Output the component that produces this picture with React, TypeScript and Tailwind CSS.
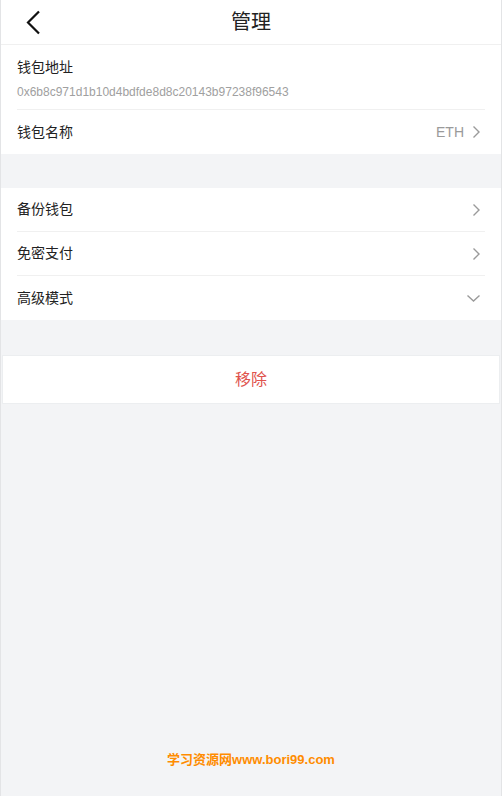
import React from "react";

const font = { fontFamily: '"Liberation Sans", "Noto Sans CJK SC", sans-serif' };

function ChevronRight() {
  return (
    <svg width="9" height="14" viewBox="0 0 9 14" fill="none">
      <path d="M1.5 1.5 L7 7 L1.5 12.5" stroke="#9a9a9a" strokeWidth="1.4" />
    </svg>
  );
}

function ChevronDown() {
  return (
    <svg width="15" height="9" viewBox="0 0 15 9" fill="none">
      <path d="M1.5 1.5 L7.5 7 L13.5 1.5" stroke="#9a9a9a" strokeWidth="1.4" />
    </svg>
  );
}

export default function App() {
  const menu = [
    { label: "备份钱包", icon: <ChevronRight /> },
    { label: "免密支付", icon: <ChevronRight /> },
    { label: "高级模式", icon: <ChevronDown /> },
  ];

  return (
    <div
      className="min-h-[796px] bg-[#f3f4f6] border-x border-[#e3e4e6] flex flex-col text-[#222]"
      style={font}
    >
      {/* HEADER */}
      <div className="relative h-[45px] bg-white border-b border-[#f0f0f0] flex items-center justify-center">
        <button className="absolute left-[24px] top-[10px]">
          <svg width="18" height="25" viewBox="0 0 18 25" fill="none">
            <path d="M14 1.5 L3 12.5 L14 23.5" stroke="#111" strokeWidth="2.2" />
          </svg>
        </button>
        <span className="text-[20px] text-[#222]">管理</span>
      </div>

      {/* WALLET INFO */}
      <div className="bg-white">
        <div className="mx-[16px] border-b border-[#f0f0f0] pt-[13px] h-[65px]">
          <p className="text-[14px] leading-[18px]">钱包地址</p>
          <p className="mt-[8px] text-[12px] leading-[16px] text-[#a0a0a0]">
            0x6b8c971d1b10d4bdfde8d8c20143b97238f96543
          </p>
        </div>
        <div className="mx-[16px] h-[44px] flex items-center justify-between">
          <span className="text-[14px]">钱包名称</span>
          <span className="flex items-center gap-[8px] pr-[4px] text-[14px] text-[#9a9a9a]">
            ETH
            <ChevronRight />
          </span>
        </div>
      </div>

      <div className="h-[34px]" />

      {/* MENU */}
      <div className="bg-white">
        {menu.map((item, i) => (
          <div
            key={item.label}
            className={`mx-[16px] h-[44px] flex items-center justify-between ${
              i < menu.length - 1 ? "border-b border-[#f0f0f0]" : ""
            }`}
          >
            <span className="text-[14px]">{item.label}</span>
            <span className="pr-[4px]">{item.icon}</span>
          </div>
        ))}
      </div>

      <div className="h-[35px]" />

      {/* REMOVE */}
      <button className="mx-px h-[49px] bg-white border border-[#eceef0] text-[16px] text-[#e0524c]">
        移除
      </button>

      <div className="flex-1" />

      <p className="text-center text-[13px] font-bold text-[#ff8c00] pb-[27px]">
        学习资源网www.bori99.com
      </p>
    </div>
  );
}
